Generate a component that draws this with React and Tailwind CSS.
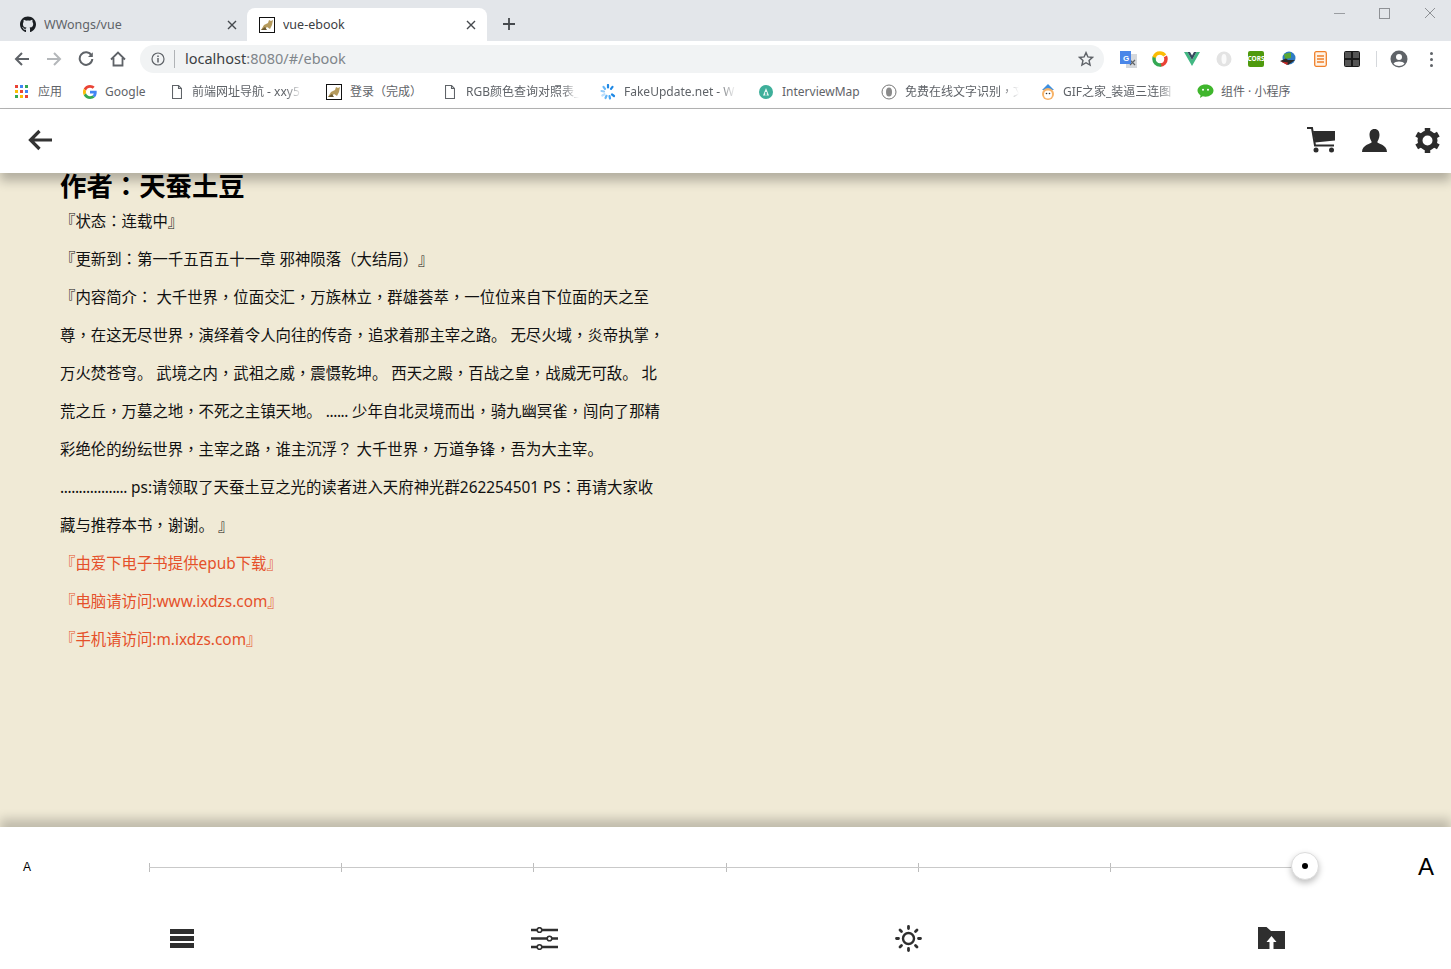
import { FaGithub } from 'react-icons/fa';

const cjk = 'font-["Noto_Sans","Noto_Sans_CJK_SC",sans-serif] [text-spacing-trim:space-all]';

// the reference font centres these marks in their cell, the TC cut of Noto does the same
function Zh({ text }) {
    return text.split(/([，：？（）]|\.{6,})/).map((part, i) => {
        if (/^[，：？（）]$/.test(part)) {
            return <span key={i} className="leading-none font-['Noto_Sans_CJK_TC',sans-serif]">{part}</span>;
        }
        if (part.startsWith('......')) {
            return <span key={i} className="tracking-[-0.4px]">{part}</span>;
        }
        return part;
    });
}

// little tomcat favicon used by the localhost tabs
function Tomcat() {
    return (
        <svg width="16" height="16" viewBox="0 0 16 16" className="shrink-0">
            <rect x="0.5" y="0.5" width="15" height="15" fill="#fff" stroke="#111" />
            <path d="M2 13 L5 8 L9 6 L10 3 L12 4 L14 3 L13 8 L11 12 L8 10 L5 13 Z" fill="#b59a5c" />
            <path d="M2 13 L6 10 L8 13 Z" fill="#6b5a33" />
        </svg>
    );
}

function DocIcon() {
    return (
        <svg width="10" height="14" viewBox="0 0 10 14" fill="none" stroke="#5f6368" strokeWidth="1.1" className="shrink-0">
            <path d="M0.5 0.5 H6.5 L9.5 3.5 V13.5 H0.5 Z" />
            <path d="M6.5 0.5 V3.5 H9.5" />
        </svg>
    );
}

function AppsIcon() {
    const colors = ['#ea4335', '#4285f4', '#34a853', '#fbbc05', '#ea4335', '#4285f4', '#34a853', '#fbbc05', '#ea4335'];
    return (
        <div className="grid grid-cols-3 gap-[2px] w-[13px] shrink-0">
            {colors.map((c, i) => <span key={i} className="w-[3px] h-[3px]" style={{ background: c }} />)}
        </div>
    );
}

function GoogleIcon() {
    return (
        <svg width="14" height="14" viewBox="0 0 48 48" className="shrink-0">
            <path fill="#EA4335" d="M24 9.5c3.5 0 6.6 1.2 9.1 3.6l6.8-6.8C35.800 2.400 30.400 0 24 0 14.600 0 6.500 5.400 2.600 13.200l7.900 6.200C12.400 13.600 17.700 9.500 24 9.500z" />
            <path fill="#4285F4" d="M47 24.500c0-1.600-.1-3.100-.4-4.500H24v9h12.900c-.6 3-2.200 5.500-4.700 7.200l7.700 6C44.400 38 47 31.800 47 24.500z" />
            <path fill="#FBBC05" d="M10.500 28.600C10 27.200 9.800 25.600 9.800 24s.3-3.200.7-4.600l-7.900-6.200C.9 16.500 0 20.100 0 24s.9 7.500 2.600 10.800l7.900-6.200z" />
            <path fill="#34A853" d="M24 48c6.500 0 11.900-2.100 15.900-5.800l-7.700-6c-2.200 1.500-4.900 2.300-8.200 2.300-6.300 0-11.600-4.200-13.500-9.900l-7.900 6.200C6.500 42.600 14.600 48 24 48z" />
        </svg>
    );
}

function SpinnerIcon() {
    return (
        <svg width="16" height="16" viewBox="0 0 16 16" fill="none" strokeWidth="2.200" strokeLinecap="round" className="shrink-0">
            <path d="M8 1 V3.500" stroke="#1e88e5" />
            <path d="M12.500 2.800 L11 4.800" stroke="#1e88e5" />
            <path d="M3.500 2.800 L5 4.800" stroke="#64b5f6" />
            <path d="M1.500 7 L4 7.500" stroke="#90caf9" />
            <path d="M2.300 11.500 L4.500 10.200" stroke="#bbdefb" />
            <path d="M5.500 14 L6.500 11.800" stroke="#64b5f6" />
            <path d="M10 14.500 L9.500 12" stroke="#42a5f5" />
            <path d="M14 12 L12 10.500" stroke="#1e88e5" />
        </svg>
    );
}

function InterviewIcon() {
    return (
        <svg width="14" height="14" viewBox="0 0 14 14" className="shrink-0">
            <circle cx="7" cy="7" r="7" fill="#3eaf9a" />
            <path d="M7 3 L10 10.500 H4 Z" fill="#e8f6f3" />
            <path d="M6.200 7 H7.800 V10.500 H6.200 Z" fill="#3eaf9a" />
        </svg>
    );
}

function OcrIcon() {
    return (
        <svg width="16" height="16" viewBox="0 0 16 16" className="shrink-0">
            <circle cx="8" cy="8" r="7" fill="#fff" stroke="#777" />
            <ellipse cx="8" cy="8" rx="3" ry="4.500" fill="#8a8a8a" />
        </svg>
    );
}

function GifIcon() {
    return (
        <svg width="16" height="18" viewBox="0 0 16 18" className="shrink-0">
            <path d="M8 1 L14 7 H2 Z" fill="#3d8fe0" />
            <circle cx="8" cy="11" r="6" fill="#f7b267" />
            <circle cx="8" cy="11.500" r="4" fill="#fff" />
            <circle cx="6.500" cy="10.500" r="0.800" fill="#333" />
            <circle cx="9.500" cy="10.500" r="0.800" fill="#333" />
        </svg>
    );
}

function WechatIcon() {
    return (
        <svg width="17" height="15" viewBox="0 0 17 15" className="shrink-0">
            <path d="M8.500 0.500 C13 0.500 16.500 3.200 16.500 6.600 C16.500 10 13 12.700 8.500 12.700 C7.500 12.700 6.600 12.600 5.800 12.300 L3 14 L3.500 11.200 C1.600 10 0.500 8.400 0.500 6.600 C0.500 3.200 4 0.500 8.500 0.500 Z" fill="#3fb62c" />
            <circle cx="6" cy="5.800" r="1" fill="#fff" />
            <circle cx="11" cy="5.800" r="1" fill="#fff" />
        </svg>
    );
}

const bookmarks = [
    { icon: <AppsIcon />, text: '应用', w: 'w-[68px]', tw: 'w-[25px]', gap: 'gap-[10px]', ml: 'ml-[15px]' },
    { icon: <GoogleIcon />, text: 'Google', w: 'w-[89px]', tw: 'w-[44px]', gap: 'gap-[8px]', ml: '' },
    { icon: <DocIcon />, text: '前端网址导航 - xxy5', w: 'w-[154px]', tw: 'w-[110px]', gap: 'gap-[10px]', fade: true, ml: '' },
    { icon: <Tomcat />, text: '登录（完成）', w: 'w-[119px]', tw: 'w-[72px]', gap: 'gap-[8px]', ml: '' },
    { icon: <DocIcon />, text: 'RGB颜色查询对照表_', w: 'w-[155px]', tw: 'w-[113px]', gap: 'gap-[11px]', fade: true, ml: '' },
    { icon: <SpinnerIcon />, text: 'FakeUpdate.net - W', w: 'w-[159px]', tw: 'w-[112px]', gap: 'gap-[8px]', fade: true, ml: '' },
    { icon: <InterviewIcon />, text: 'InterviewMap', w: 'w-[122px]', tw: 'w-[80px]', gap: 'gap-[9px]', ml: '' },
    { icon: <OcrIcon />, text: '免费在线文字识别，文', w: 'w-[159px]', tw: 'w-[114px]', gap: 'gap-[8px]', fade: true, ml: '' },
    { icon: <GifIcon />, text: 'GIF之家_装逼三连图', w: 'w-[157px]', tw: 'w-[113px]', gap: 'gap-[7px]', fade: true, ml: '' },
    { icon: <WechatIcon />, text: '组件 · 小程序', w: 'w-[100px]', tw: 'w-[72px]', gap: 'gap-[7px]', ml: '' },
];

function Tab({ active, icon, title }) {
    return (
        <div className={`w-[240px] h-[33px] flex items-center pl-3 pr-[10px] rounded-t-lg ${active ? 'bg-white text-[#3c4043]' : 'text-[#5f6368]'}`}>
            <span className="w-4 h-4 flex items-center justify-center shrink-0">{icon}</span>
            <span className="ml-2 pt-[2px] text-[12.500px] flex-1 truncate">{title}</span>
            <svg width="10" height="10" viewBox="0 0 10 10" stroke="#45494d" strokeWidth="1.400" className="shrink-0 mr-[1px]">
                <path d="M1 1 L9 9 M9 1 L1 9" />
            </svg>
        </div>
    );
}

function NavButton({ children }) {
    return <div className="w-8 h-7 flex items-center justify-center shrink-0">{children}</div>;
}

function BrowserChrome() {
    return (
        <div className={`shrink-0 ${cjk}`}>
            <div className="h-[41px] bg-[#e3e6ea] flex items-end relative">
                <div className="ml-2 flex items-end">
                    <Tab icon={<FaGithub size={17} color="#1b1f23" />} title="WWongs/vue" />
                    <div className="-ml-[1px]">
                        <Tab active icon={<Tomcat />} title="vue-ebook" />
                    </div>
                </div>
                <svg width="12" height="12" viewBox="0 0 12 12" stroke="#45494d" strokeWidth="1.800" className="ml-4 mb-[11px]">
                    <path d="M6 0 V12 M0 6 H12" />
                </svg>
                {/* window buttons */}
                <div className="absolute right-[15px] top-[7px] flex items-center gap-[34px]">
                    <span className="w-[11px] h-[1px] bg-[#9a9da1]" />
                    <span className="w-[11px] h-[11px] border border-[#8e9195]" />
                    <svg width="12" height="12" viewBox="0 0 12 12" stroke="#8e9195" strokeWidth="1">
                        <path d="M1 1 L11 11 M11 1 L1 11" />
                    </svg>
                </div>
            </div>

            <div className="h-9 bg-white flex items-center pl-[6px]">
                <NavButton>
                    <svg width="16" height="16" viewBox="0 0 16 16" fill="none" stroke="#5f6368" strokeWidth="2"><path d="M15 8 H2 M8 2 L2 8 L8 14" /></svg>
                </NavButton>
                <NavButton>
                    <svg width="16" height="16" viewBox="0 0 16 16" fill="none" stroke="#b4b7ba" strokeWidth="2"><path d="M1 8 H14 M8 2 L14 8 L8 14" /></svg>
                </NavButton>
                <NavButton>
                    <svg width="16" height="16" viewBox="0 0 16 16" fill="none" stroke="#5f6368" strokeWidth="2"><path d="M13.500 4.500 A6.300 6.300 0 1 0 14.300 8" /><path d="M14.800 1.200 V6 H10" fill="#5f6368" stroke="none" /></svg>
                </NavButton>
                <NavButton>
                    <svg width="16" height="16" viewBox="0 0 16 16" fill="none" stroke="#5f6368" strokeWidth="1.800"><path d="M1 8.500 L8 1.500 L15 8.500 M3.500 7 V14.500 H12.500 V7" /></svg>
                </NavButton>
                <div className="ml-[6px] w-[964px] h-7 rounded-full bg-[#f1f3f4] flex items-center pl-[11px] pr-[10px]">
                    <svg width="14" height="14" viewBox="0 0 14 14" fill="none" stroke="#5f6368" strokeWidth="1.200" className="shrink-0">
                        <circle cx="7" cy="7" r="6" />
                        <path d="M7 6 V10.500 M7 3.500 V5" strokeWidth="1.500" />
                    </svg>
                    <span className="ml-[9px] w-[1px] h-[18px] bg-[#b0b3b6]" />
                    <span className="ml-[10px] flex-1 text-[14.500px] text-[#80868b]"><span className="text-[#3c4043]">localhost</span>:8080/#/ebook</span>
                    <svg width="16" height="16" viewBox="0 0 24 24" fill="none" stroke="#5f6368" strokeWidth="2.200" className="shrink-0">
                        <path d="M12 2.500 L14.900 8.900 L21.800 9.600 L16.600 14.300 L18.100 21.200 L12 17.600 L5.900 21.200 L7.400 14.300 L2.200 9.600 L9.100 8.900 Z" />
                    </svg>
                </div>
                <div className="ml-2 flex items-center">
                    <NavButton>
                        <svg width="17" height="17" viewBox="0 0 17 17">
                            <rect x="6" y="3" width="11" height="14" fill="#d5d8dc" />
                            <path d="M10 9 L15 14 M15 9 L10 14" stroke="#5f6368" strokeWidth="1.200" />
                            <rect x="0" y="0" width="11" height="13" fill="#4a86e8" />
                            <text x="3" y="10" fontSize="8" fontWeight="700" fill="#fff" fontFamily="Liberation Sans, sans-serif">G</text>
                        </svg>
                    </NavButton>
                    <NavButton>
                        <svg width="16" height="16" viewBox="0 0 16 16" fill="none" strokeWidth="3.500">
                            <circle cx="8" cy="8" r="6" stroke="#ea4335" strokeDasharray="13 25" strokeDashoffset="4" />
                            <circle cx="8" cy="8" r="6" stroke="#34a853" strokeDasharray="13 25" strokeDashoffset="-8" />
                            <circle cx="8" cy="8" r="6" stroke="#fbbc05" strokeDasharray="13 25" strokeDashoffset="-20" />
                        </svg>
                    </NavButton>
                    <NavButton>
                        <svg width="16" height="14" viewBox="0 0 16 14">
                            <path d="M0 0 H3.500 L8 8 L12.500 0 H16 L8 14 Z" fill="#42b883" />
                            <path d="M3.500 0 H6 L8 3.500 L10 0 H12.500 L8 8 Z" fill="#35495e" />
                        </svg>
                    </NavButton>
                    <NavButton>
                        <svg width="16" height="16" viewBox="0 0 16 16">
                            <circle cx="8" cy="8" r="7.500" fill="#e3e3e3" />
                            <ellipse cx="8" cy="8" rx="2.500" ry="5" fill="#fafafa" />
                        </svg>
                    </NavButton>
                    <NavButton>
                        <div className="w-4 h-4 rounded-[2px] bg-[#4f9a0d] flex items-center justify-center text-[6.500px] font-bold text-white">CORS</div>
                    </NavButton>
                    <NavButton>
                        <svg width="16" height="16" viewBox="0 0 16 16">
                            <circle cx="9" cy="7" r="6.500" fill="#2e7bc4" />
                            <path d="M4 3 L11 1.500 L11 7 L5 8 Z" fill="#5aa832" />
                            <path d="M0 10 L6 7.500 L8 9 L15 9 L8 14 Z" fill="#2a2a2a" />
                            <path d="M1 10.500 L8 11.500 L7 14 Z" fill="#c62828" />
                        </svg>
                    </NavButton>
                    <NavButton>
                        <svg width="13" height="16" viewBox="0 0 13 16" fill="none" stroke="#f0802a" strokeWidth="1.300">
                            <rect x="0.700" y="0.700" width="11.600" height="14.600" rx="1.500" fill="#fff3e6" />
                            <path d="M3 5 H10 M3 8 H10 M3 11 H10" />
                        </svg>
                    </NavButton>
                    <NavButton>
                        <div className="w-4 h-4 rounded-[2px] bg-[#1a1a1a] grid grid-cols-2 gap-[2px] p-[1px]">
                            <span className="bg-[#555]" /><span className="bg-[#555]" /><span className="bg-[#555]" /><span className="bg-[#555]" />
                        </div>
                    </NavButton>
                </div>
                <span className="ml-2 w-[1px] h-4 bg-[#d5d8dc]" />
                <div className="ml-[6px] flex items-center">
                    <NavButton>
                        <svg width="18" height="18" viewBox="0 0 18 18">
                            <circle cx="9" cy="9" r="8.500" fill="#5f6368" />
                            <circle cx="9" cy="7" r="3" fill="#fff" />
                            <path d="M3.500 13.500 C5 10.800 13 10.800 14.500 13.500 C13 15.300 11 16 9 16 C7 16 5 15.300 3.500 13.500 Z" fill="#fff" />
                        </svg>
                    </NavButton>
                    <NavButton>
                        <div className="flex flex-col gap-[3px]">
                            <span className="w-[3px] h-[3px] rounded-full bg-[#5f6368]" />
                            <span className="w-[3px] h-[3px] rounded-full bg-[#5f6368]" />
                            <span className="w-[3px] h-[3px] rounded-full bg-[#5f6368]" />
                        </div>
                    </NavButton>
                </div>
            </div>

            <div className="h-[32px] pb-[2px] bg-white border-b border-[#b3b3b3] flex items-center text-[12px] text-[#5f6368]">
                {bookmarks.map((b) => (
                    <div key={b.text} className={`${b.w} ${b.ml} ${b.gap} flex items-center shrink-0`}>
                        {b.icon}
                        <span className={`${b.tw} overflow-hidden whitespace-nowrap ${b.fade ? '[mask-image:linear-gradient(to_right,black_85%,transparent)]' : ''}`}><Zh text={b.text} /></span>
                    </div>
                ))}
            </div>
        </div>
    );
}

function Header() {
    return (
        <div className="relative z-10 h-16 shrink-0 bg-white flex items-center justify-between pl-[28px] pb-[2px] shadow-[0_8px_10px_rgba(0,0,0,0.25)]">
            <svg width="25" height="22" viewBox="0 0 25 22" fill="none" stroke="#333" strokeWidth="3.200">
                <path d="M24 11 H3 M11.500 2 L2.500 11 L11.500 20" />
            </svg>
            <div className="flex items-center gap-[5px]">
                <div className="w-[48px] flex justify-center">
                    <svg width="29" height="26" viewBox="0 0 29 26">
                        <path d="M0 1 H5 L8 18.500 H27" fill="none" stroke="#2c2c2c" strokeWidth="2" />
                        <path d="M6 4 H28 V13.500 L8 15.500 Z" fill="#2c2c2c" />
                        <circle cx="9" cy="23" r="2.500" fill="#2c2c2c" />
                        <circle cx="24.500" cy="23" r="2.500" fill="#2c2c2c" />
                    </svg>
                </div>
                <div className="w-[48px] flex justify-center">
                    <svg width="25" height="23" viewBox="0 0 25 23" fill="#2c2c2c">
                        <path d="M12.500 0 C16 0 17.500 2.600 17.500 6 C17.500 9.500 15.800 11.500 15.300 13 C15.300 14.800 25 15.500 25 23 H0 C0 15.500 9.700 14.800 9.700 13 C9.200 11.500 7.500 9.500 7.500 6 C7.500 2.600 9 0 12.500 0 Z" />
                    </svg>
                </div>
                <div className="w-[48px] flex justify-center">
                    <svg width="27" height="27" viewBox="0 0 27 27" fill="none" stroke="#2c2c2c">
                        <circle cx="13.500" cy="13.500" r="7.500" strokeWidth="5" />
                        <path d="M13.500 1 V5 M13.500 22 V26 M2.700 7.200 L6.200 9.200 M20.800 17.800 L24.300 19.800 M2.700 19.800 L6.200 17.800 M20.800 9.200 L24.300 7.200" strokeWidth="5.500" />
                    </svg>
                </div>
            </div>
        </div>
    );
}

const introLines = [
    '『内容简介： 大千世界，位面交汇，万族林立，群雄荟萃，一位位来自下位面的天之至',
    '尊，在这无尽世界，演绎着令人向往的传奇，追求着那主宰之路。 无尽火域，炎帝执掌，',
    '万火焚苍穹。 武境之内，武祖之威，震慑乾坤。 西天之殿，百战之皇，战威无可敌。 北',
    '荒之丘，万墓之地，不死之主镇天地。 ...... 少年自北灵境而出，骑九幽冥雀，闯向了那精',
    '彩绝伦的纷纭世界，主宰之路，谁主沉浮？ 大千世界，万道争锋，吾为大主宰。',
    '.................. ps:请领取了天蚕土豆之光的读者进入天府神光群262254501 PS：再请大家收',
    '藏与推荐本书，谢谢。 』',
];

function Reader() {
    return (
        <main className={`flex-1 min-h-0 overflow-hidden bg-[#f0ead6] pl-[60px] text-[15.400px] leading-[38px] text-[#111] ${cjk}`}>
            <h1 className="text-[26.400px] leading-[33px] font-bold text-black -mt-[3px] whitespace-nowrap"><Zh text="作者：天蚕土豆" /></h1>
            <p className="whitespace-nowrap"><Zh text="『状态：连载中』" /></p>
            <p className="whitespace-nowrap"><Zh text="『更新到：第一千五百五十一章 邪神陨落（大结局）』" /></p>
            {introLines.map((line) => <p key={line} className="whitespace-nowrap"><Zh text={line} /></p>)}
            <div className="text-[#e5502a]">
                <p>『由爱下电子书提供epub下载』</p>
                <p>『电脑请访问:www.ixdzs.com』</p>
                <p>『手机请访问:m.ixdzs.com』</p>
            </div>
        </main>
    );
}

function FontSlider() {
    const segments = [0, 1, 2, 3, 4, 5];
    return (
        <div className="h-20 flex items-center">
            <div className="w-[149px] pl-[23px] text-[12px] text-black font-['Liberation_Sans',sans-serif]">A</div>
            <div className="relative w-[1156px] h-[9px] flex">
                <div className="absolute left-0 right-0 top-[4px] h-[1px] bg-[#c9c9c9]" />
                {segments.map((s) => (
                    <div key={s} className="w-[192.200px] h-[9px] border-l border-[#bdbdbd]" />
                ))}
                <div className="absolute right-[-14px] top-[-11px] w-[28px] h-[28px] rounded-full bg-white border border-[#dcdcdc] shadow-[0_3px_6px_rgba(0,0,0,0.25)] flex items-center justify-center">
                    <span className="w-[6px] h-[6px] rounded-full bg-black" />
                </div>
            </div>
            <div className="flex-1 pl-[113px] text-[24px] leading-none text-black font-['Liberation_Sans',sans-serif]">A</div>
        </div>
    );
}

function ToolBar() {
    return (
        <div className="h-[62px] flex pl-[0.5px]">
            <div className="w-[363px] flex items-center justify-center">
                <div className="w-[24px] flex flex-col gap-[2px]">
                    <span className="h-[5px] bg-[#2f2f2f]" />
                    <span className="h-[5px] bg-[#2f2f2f]" />
                    <span className="h-[5px] bg-[#2f2f2f]" />
                </div>
            </div>
            <div className="w-[363px] flex items-center justify-center">
                <svg width="27" height="23" viewBox="0 0 27 23" fill="none" stroke="#2f2f2f">
                    <path d="M0 3 H27 M0 11.500 H27 M0 20 H27" strokeWidth="2.500" />
                    <circle cx="8.500" cy="3" r="2.300" fill="#fff" strokeWidth="1.600" />
                    <circle cx="18.500" cy="11.500" r="2.300" fill="#fff" strokeWidth="1.600" />
                    <circle cx="8.500" cy="20" r="2.300" fill="#fff" strokeWidth="1.600" />
                </svg>
            </div>
            <div className="w-[363px] pl-[2px] flex items-center justify-center">
                <svg width="27" height="27" viewBox="0 0 27 27" fill="none" stroke="#2f2f2f">
                    <circle cx="13.500" cy="13.500" r="5.500" strokeWidth="2.400" />
                    <path d="M13.500 1.500 V3.500 M13.500 23.500 V25.500 M1.500 13.500 H3.500 M23.500 13.500 H25.500 M5 5 L6.500 6.500 M20.500 20.500 L22 22 M5 22 L6.500 20.500 M20.500 6.500 L22 5" strokeWidth="2.800" strokeLinecap="round" />
                </svg>
            </div>
            <div className="w-[363px] pl-[3px] flex items-center justify-center">
                <svg width="27" height="22" viewBox="0 0 27 22">
                    <path d="M0 22 V0 H8.500 L13 4 H27 V22 Z" fill="#2f2f2f" />
                    <path d="M13.500 9 L18.500 15 H15.500 V22 H11.500 V15 H8.500 Z" fill="#fff" />
                </svg>
            </div>
        </div>
    );
}

export default function App() {
    return (
        <div className="w-[1451px] h-[969px] flex flex-col overflow-hidden bg-white">
            <BrowserChrome />
            <Header />
            <Reader />
            <footer className="relative z-10 h-[142px] shrink-0 bg-white shadow-[0_-8px_10px_rgba(0,0,0,0.2)]">
                <FontSlider />
                <ToolBar />
            </footer>
        </div>
    );
}
